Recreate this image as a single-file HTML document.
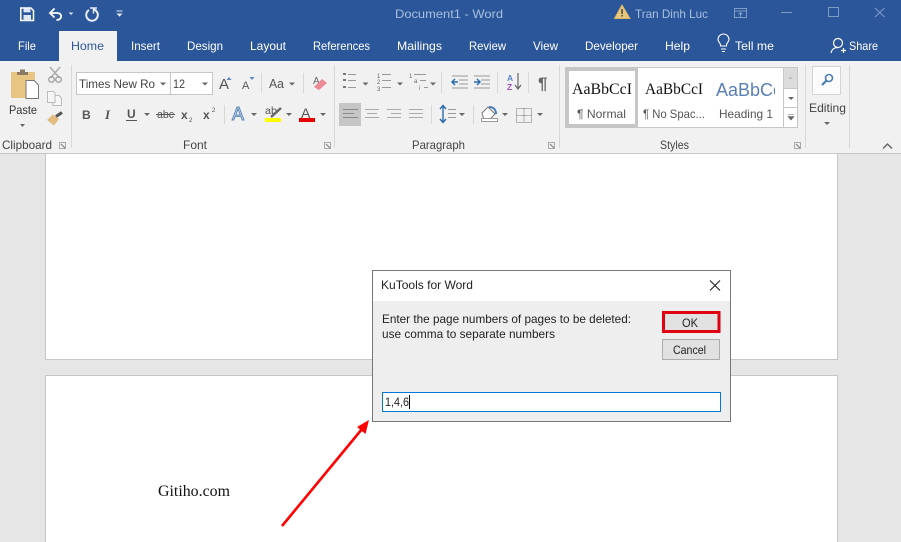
<!DOCTYPE html>
<html><head><meta charset="utf-8"><style>
html,body{margin:0;padding:0;background:#e6e6e6;width:901px;height:542px;overflow:hidden}
svg{display:block;filter:blur(.3px)}
text{font-family:"Liberation Sans",sans-serif;font-size:12px;fill:#444}
.t{fill:#fff}
.s{font-family:"Liberation Serif",serif;fill:#111}
</style></head><body>
<svg width="901" height="542" viewBox="0 0 901 542" xmlns="http://www.w3.org/2000/svg">
<defs><clipPath id="hc"><rect x="710" y="70" width="65" height="35"/></clipPath></defs>
<!-- doc area -->
<rect x="0" y="153" width="901" height="389" fill="#e6e6e6"/>
<rect x="45.5" y="140" width="792" height="219.5" fill="#fff" stroke="#c6c6c6"/>
<rect x="45.5" y="375.5" width="792" height="180" fill="#fff" stroke="#c6c6c6"/>
<text class="s" x="158" y="496" textLength="72" lengthAdjust="spacingAndGlyphs" style="font-size:15.5px">Gitiho.com</text>
<!-- title bar -->
<rect width="901" height="61" fill="#2b579a"/>
<rect x="59" y="31" width="58" height="30" fill="#f1f1f1"/>
<!-- QAT -->
<path d="M20.800 8H31L33.500 10.500V20.500H20.800Z" fill="#2b579a" stroke="#fff" stroke-width="1.500"/>
<rect x="23.500" y="8.500" width="7" height="3.800" fill="#dfe7f3"/><rect x="23.500" y="15" width="7.500" height="5.500" fill="#dfe7f3"/>
<path d="M50.500 13H57.500C62.500 13 62.500 20 56.500 20" fill="none" stroke="#fff" stroke-width="1.800"/><path d="M54.500 8.500L50 13L54.500 17.500" fill="none" stroke="#fff" stroke-width="1.800"/>
<path d="M68.500 12.500H73.500L71 15Z" fill="#d8e2f0"/>
<path d="M89 10A5.800 5.800 0 1 0 94 9.500" fill="none" stroke="#e8eef7" stroke-width="2"/><path d="M89 7.500L96 7.500V14" fill="none" stroke="#e8eef7" stroke-width="0"/><path d="M90 8H97M93.500 8V13.500" fill="none" stroke="#e8eef7" stroke-width="1.500"/>
<path d="M116.500 11H122.500" stroke="#dfe7f3" stroke-width="1"/><path d="M116.500 13.500H122.500L119.500 16.800Z" fill="#dfe7f3"/>
<text x="395" y="18" textLength="108" lengthAdjust="spacingAndGlyphs" style="fill:#a9bfdf">Document1  -  Word</text>
<path d="M622 5L630 18.500H614.500Z" fill="#e8c77c" stroke="#d9b565"/><rect x="621.300" y="9" width="1.500" height="5" fill="#444"/><rect x="621.300" y="15" width="1.500" height="1.500" fill="#444"/>
<text x="635" y="18" textLength="73" lengthAdjust="spacingAndGlyphs" style="fill:#a9bfdf">Tran Dinh Luc</text>
<path d="M734.500 8.500H746.500V17.500H734.500ZM734.500 11H746.500M740.500 17V12.500M738.500 14.500L740.500 12.500L742.500 14.500" fill="none" stroke="#7f9cc7"/>
<rect x="781" y="12" width="11" height="1" fill="#7f9cc7"/>
<rect x="828.500" y="7.500" width="10" height="9" fill="none" stroke="#7f9cc7"/>
<path d="M875 8L884.500 17M884.500 8L875 17" stroke="#7f9cc7" fill="none"/>
<!-- tabs -->
<text class="t" x="18" y="50" textLength="18" lengthAdjust="spacingAndGlyphs">File</text>
<text x="71" y="50" textLength="33" lengthAdjust="spacingAndGlyphs" style="fill:#2b579a">Home</text>
<text class="t" x="131" y="50" textLength="29" lengthAdjust="spacingAndGlyphs">Insert</text>
<text class="t" x="187" y="50" textLength="36" lengthAdjust="spacingAndGlyphs">Design</text>
<text class="t" x="250" y="50" textLength="36" lengthAdjust="spacingAndGlyphs">Layout</text>
<text class="t" x="313" y="50" textLength="57" lengthAdjust="spacingAndGlyphs">References</text>
<text class="t" x="397" y="50" textLength="45" lengthAdjust="spacingAndGlyphs">Mailings</text>
<text class="t" x="469" y="50" textLength="37" lengthAdjust="spacingAndGlyphs">Review</text>
<text class="t" x="533" y="50" textLength="25" lengthAdjust="spacingAndGlyphs">View</text>
<text class="t" x="585" y="50" textLength="53" lengthAdjust="spacingAndGlyphs">Developer</text>
<text class="t" x="665" y="50" textLength="25" lengthAdjust="spacingAndGlyphs">Help</text>
<path d="M720.500 46V45C720.500 43 718 42 718 39.500A5.500 5.500 0 1 1 729 39.500C729 42 726.500 43 726.500 45V46ZM721 49H726M722 51.500H725" fill="none" stroke="#fff" stroke-width="1.100"/>
<text class="t" x="735" y="50" textLength="39" lengthAdjust="spacingAndGlyphs">Tell me</text>
<circle cx="838" cy="43" r="4.500" fill="none" stroke="#fff" stroke-width="1.200"/><path d="M831 53C832 49 834 47.500 838 47.500M841 50.500H846M843.500 48V53" fill="none" stroke="#fff" stroke-width="1.200"/>
<text class="t" x="849" y="50" textLength="29" lengthAdjust="spacingAndGlyphs">Share</text>
<!-- ribbon -->
<rect y="61" width="901" height="92" fill="#f1f1f1"/>
<rect y="153" width="901" height="1" fill="#c6c6c6"/>
<path d="M71.500 65V148M334.500 65V148M559.500 65V148M805.500 65V148M849.500 65V148" stroke="#d8d8d8"/>
<path d="M224.500 105V124M261.500 73V93M303.500 73V93M441.500 72V93M497.500 72V93M528.500 72V93M431.500 105V124M473.500 105V124" stroke="#d8d8d8"/>
<!-- clipboard -->
<rect x="11" y="72" width="24" height="26" rx="1" fill="#e9c583"/>
<path d="M17 75V72H20V69.500H25V72H28V75Z" fill="#8a7a66"/>
<path d="M26 80.500H34L38.500 85V98.500H26Z" fill="#fff" stroke="#777"/>
<text x="9" y="114" textLength="28" lengthAdjust="spacingAndGlyphs" style="fill:#333">Paste</text>
<path d="M20 124H25L22.500 127Z" fill="#666"/>
<path d="M50 67L59.500 78M60 67L50.500 78" stroke="#aaa" stroke-width="1.400"/><circle cx="51.500" cy="79.500" r="2.800" fill="none" stroke="#999" stroke-width="1.200"/><circle cx="58.500" cy="79.500" r="2.800" fill="none" stroke="#999" stroke-width="1.200"/>
<path d="M47.500 91.500H53.500L55 93V102.500H47.500ZM55.500 95.500H59L61.500 98V105.500H53V103" fill="#f6f6f6" stroke="#bbb"/>
<path d="M47 120L54 125.500L59 119L53 114.500Z" fill="#e2bd7e"/><path d="M56 116.500L62 112.500" stroke="#555" stroke-width="3"/>
<text x="2" y="149" textLength="50" lengthAdjust="spacingAndGlyphs">Clipboard</text>
<path d="M59.500 142.500H65.500V148.500H59.500Z" fill="none" stroke="#aaa"/><path d="M61 144L65 148" stroke="#777"/>
<text x="183" y="149" textLength="24" lengthAdjust="spacingAndGlyphs">Font</text>
<path d="M324.500 142.500H330.500V148.500H324.500Z" fill="none" stroke="#aaa"/><path d="M326 144L330 148" stroke="#777"/>
<text x="412" y="149" textLength="53" lengthAdjust="spacingAndGlyphs">Paragraph</text>
<path d="M548.500 142.500H554.500V148.500H548.500Z" fill="none" stroke="#aaa"/><path d="M550 144L554 148" stroke="#777"/>
<text x="660" y="149" textLength="29" lengthAdjust="spacingAndGlyphs">Styles</text>
<path d="M794.500 142.500H800.500V148.500H794.500Z" fill="none" stroke="#aaa"/><path d="M796 144L800 148" stroke="#777"/>
<path d="M883 148.500L887.500 144L892 148.500" fill="none" stroke="#666" stroke-width="1.500"/>
<!-- font -->
<rect x="76.500" y="72.500" width="136" height="22" fill="#fff" stroke="#c6c6c6"/><path d="M170.500 72V95" stroke="#c6c6c6"/>
<text x="79" y="88" textLength="76" lengthAdjust="spacingAndGlyphs">Times New Ro</text>
<path d="M160 82.500H166L163 85.500Z" fill="#666"/>
<text x="173" y="88" textLength="12" lengthAdjust="spacingAndGlyphs">12</text>
<path d="M202 82.500H208L205 85.500Z" fill="#666"/>
<text x="219" y="89" style="font-size:15px;fill:#555">A</text><path d="M229 77L231.500 80H226.500Z" fill="#5b87c4"/>
<text x="242" y="89" style="font-size:11px;fill:#555">A</text><path d="M252 80L249.500 77H254.500Z" fill="#5b87c4"/>
<text x="269" y="88" textLength="15" lengthAdjust="spacingAndGlyphs" style="font-size:13px;fill:#555">Aa</text><path d="M289 82.500H295L292 85.500Z" fill="#666"/>
<text x="313" y="84" style="font-size:10px;fill:#666">A</text><path d="M314 87L322 79L327 83L319 90Z" fill="#e98a96"/>
<text x="82" y="119" style="font-weight:bold;fill:#555">B</text>
<text x="105" y="119" style="font-family:'Liberation Serif',serif;font-size:13px;font-style:italic;font-weight:bold;fill:#555">I</text>
<text x="127" y="118" style="font-weight:bold;fill:#555">U</text><rect x="126" y="120" width="11" height="1" fill="#555"/>
<path d="M144 113H150L147 116Z" fill="#666"/>
<text x="157" y="118" textLength="17" lengthAdjust="spacingAndGlyphs" style="font-size:11px;fill:#555">abc</text><path d="M156 114.500H175" stroke="#555"/>
<text x="181" y="119" style="font-weight:bold;fill:#555">x</text><text x="189" y="122" style="font-size:6px;fill:#555">2</text>
<text x="203" y="119" style="font-weight:bold;fill:#555">x</text><text x="212" y="112" style="font-size:6px;fill:#555">2</text>
<text x="232" y="120" style="font-size:18px;fill:#d6e6f6;stroke:#5b87b8;stroke-width:1">A</text><path d="M251 113H257L254 116Z" fill="#666"/>
<text x="265" y="114" textLength="12" lengthAdjust="spacingAndGlyphs" style="font-size:10px;fill:#555">ab</text><path d="M271 117L281 108" stroke="#666" stroke-width="2.500"/><rect x="265" y="118" width="16" height="4" fill="#ffff00"/><path d="M286 113H292L289 116Z" fill="#666"/>
<text x="301" y="118" style="font-size:14px;fill:#555">A</text><rect x="299" y="118" width="16" height="4" fill="#e60000"/><path d="M320 113H326L323 116Z" fill="#666"/>
<!-- paragraph -->
<g fill="#777"><rect x="343" y="73" width="3" height="2"/><rect x="343" y="79" width="3" height="2"/><rect x="343" y="86" width="3" height="2"/></g>
<path d="M348 74.500H356M348 80.500H356M348 87.500H356" stroke="#999"/><path d="M362.500 82.500H368.500L365.500 85.500Z" fill="#666"/>
<text x="377" y="78" style="font-size:6px;fill:#666">1</text><text x="377" y="84" style="font-size:6px;fill:#666">2</text><text x="377" y="91" style="font-size:6px;fill:#666">3</text>
<path d="M382 74.500H391M382 80.500H391M382 87.500H391" stroke="#999"/><path d="M397 82.500H403L400 85.500Z" fill="#666"/>
<text x="409" y="78" style="font-size:6px;fill:#666">1</text><text x="414" y="83" style="font-size:6px;fill:#666">a</text><text x="419" y="90" style="font-size:6px;fill:#666">i</text>
<path d="M414 74.500H426M420 80.500H426M424 87.500H428" stroke="#999"/><path d="M430 82.500H436L433 85.500Z" fill="#666"/>
<path d="M452 76H468M459 80H468M459 84H468M452 88H468" stroke="#999"/><path d="M452 82H458M455 79L452 82L455 85" stroke="#2b6cb0" stroke-width="1.500" fill="none"/>
<path d="M474 76H490M481 80H490M481 84H490M474 88H490" stroke="#999"/><path d="M474 82H480M477 79L480 82L477 85" stroke="#2b6cb0" stroke-width="1.500" fill="none"/>
<text x="507" y="81" style="font-size:8.500px;fill:#5b87c4;font-weight:bold">A</text><text x="507" y="90" style="font-size:8.500px;fill:#a24cc0;font-weight:bold">Z</text>
<path d="M518 73V88M515 85L518 89L521 85" stroke="#666" fill="none" stroke-width="1.200"/>
<text x="538" y="89" style="font-size:17px;fill:#666;font-weight:bold">¶</text>
<rect x="339" y="103" width="22" height="23" fill="#c6c6c6"/>
<path d="M343 109.500H358M343 113.500H354M343 117.500H358" stroke="#888"/>
<path d="M365 109.500H379M367 113.500H377M365 117.500H379" stroke="#aaa"/>
<path d="M387 109.500H401M391 113.500H401M387 117.500H401" stroke="#aaa"/>
<path d="M409 109.500H423M409 113.500H423M409 117.500H423" stroke="#aaa"/>
<path d="M443 106V122M440 109L443 105.500L446 109M440 119L443 122.500L446 119" fill="none" stroke="#2b6cb0" stroke-width="1.400"/>
<path d="M448 109.500H456M448 113.500H456M448 117.500H456" stroke="#999"/><path d="M459 113H465L462 116Z" fill="#666"/>
<path d="M482 113L488 107L495 114L489 120H484Z" fill="#fff" stroke="#777"/><path d="M489 107C494 107 496 110 496 114" stroke="#4a7db5" stroke-width="2" fill="none"/>
<rect x="481.500" y="118.500" width="16" height="3" fill="#fff" stroke="#999"/><path d="M502 113H508L505 116Z" fill="#666"/>
<path d="M516.500 108.500H531.500V122.500H516.500ZM524 108.500V122.500M516.500 115.500H531.500" fill="none" stroke="#777" stroke-dasharray="1 1"/><path d="M537 113H543L540 116Z" fill="#666"/>
<!-- styles -->
<rect x="565.500" y="67.500" width="232" height="60" fill="#fff" stroke="#c6c6c6"/>
<rect x="567.500" y="69.500" width="69" height="56" fill="#fff" stroke="#c6c6c6" stroke-width="3"/>
<text class="s" x="572" y="94" textLength="60" lengthAdjust="spacingAndGlyphs" style="font-size:15.5px">AaBbCcI</text>
<text x="577" y="118" textLength="49" lengthAdjust="spacingAndGlyphs" style="fill:#555">¶ Normal</text>
<text class="s" x="645" y="94" textLength="58" lengthAdjust="spacingAndGlyphs" style="font-size:15.5px">AaBbCcI</text>
<text x="643" y="118" textLength="62" lengthAdjust="spacingAndGlyphs" style="fill:#555">¶ No Spac...</text>
<g clip-path="url(#hc)"><text x="716" y="96" textLength="66" lengthAdjust="spacingAndGlyphs" style="font-size:18.5px;fill:#5a7fb5">AaBbCc</text></g>
<text x="719" y="118" textLength="54" lengthAdjust="spacingAndGlyphs" style="fill:#555">Heading 1</text>
<rect x="783.500" y="67.500" width="14" height="21" fill="#dcdcdc" stroke="#c6c6c6"/>
<rect x="783.500" y="88.500" width="14" height="19" fill="#fff" stroke="#c6c6c6"/>
<rect x="783.500" y="107.500" width="14" height="20" fill="#fff" stroke="#c6c6c6"/>
<path d="M788 79L790.500 76.500L793 79Z" fill="#bbb"/><path d="M788 97H794L791 100Z" fill="#666"/>
<path d="M788 114.500H794M788 116.500H794L791 120Z" fill="#666" stroke="#666" stroke-width=".6"/>
<!-- editing -->
<rect x="812.500" y="66.500" width="28" height="28" fill="#fbfbfb" stroke="#d4d4d4"/>
<circle cx="829" cy="78" r="3.500" fill="none" stroke="#4a7db5" stroke-width="1.600"/><path d="M826.500 80.500L822 85" stroke="#4a7db5" stroke-width="2.200"/>
<text x="809" y="112" textLength="37" lengthAdjust="spacingAndGlyphs">Editing</text>
<path d="M824 122H830L827 125Z" fill="#666"/>
<!-- arrow -->
<path d="M282 526L362 429" stroke="#f00" stroke-width="2.600" fill="none"/>
<path d="M369 420L365.500 434L357 427Z" fill="#f00"/>
<!-- dialog -->
<rect x="372.500" y="270.500" width="358" height="151" fill="#eee" stroke="#777"/>
<rect x="373" y="271" width="357" height="30" fill="#fff"/>
<text x="381" y="289" textLength="92" lengthAdjust="spacingAndGlyphs" style="fill:#222">KuTools for Word</text>
<path d="M710 280.500L720 290.500M720 280.500L710 290.500" stroke="#222" fill="none" stroke-width="1.100"/>
<text x="382" y="323" textLength="249" lengthAdjust="spacingAndGlyphs" style="fill:#222">Enter the page numbers of pages to be deleted:</text>
<text x="382" y="338" textLength="173" lengthAdjust="spacingAndGlyphs" style="fill:#222">use comma to separate numbers</text>
<rect x="663.500" y="312.500" width="55.500" height="19" fill="#e1e1e1" stroke="#e00012" stroke-width="3"/>
<text x="682" y="327" textLength="16" lengthAdjust="spacingAndGlyphs" style="fill:#222">OK</text>
<rect x="662.500" y="339.500" width="57" height="20" fill="#e1e1e1" stroke="#adadad"/>
<text x="673" y="354" textLength="33" lengthAdjust="spacingAndGlyphs" style="fill:#222">Cancel</text>
<rect x="382.500" y="392.500" width="338" height="19" fill="#fff" stroke="#0078d7"/>
<text x="385" y="406" textLength="24" lengthAdjust="spacingAndGlyphs" style="fill:#222">1,4,6</text>
<path d="M409.500 395V409" stroke="#000"/>
</svg>
</body></html>
